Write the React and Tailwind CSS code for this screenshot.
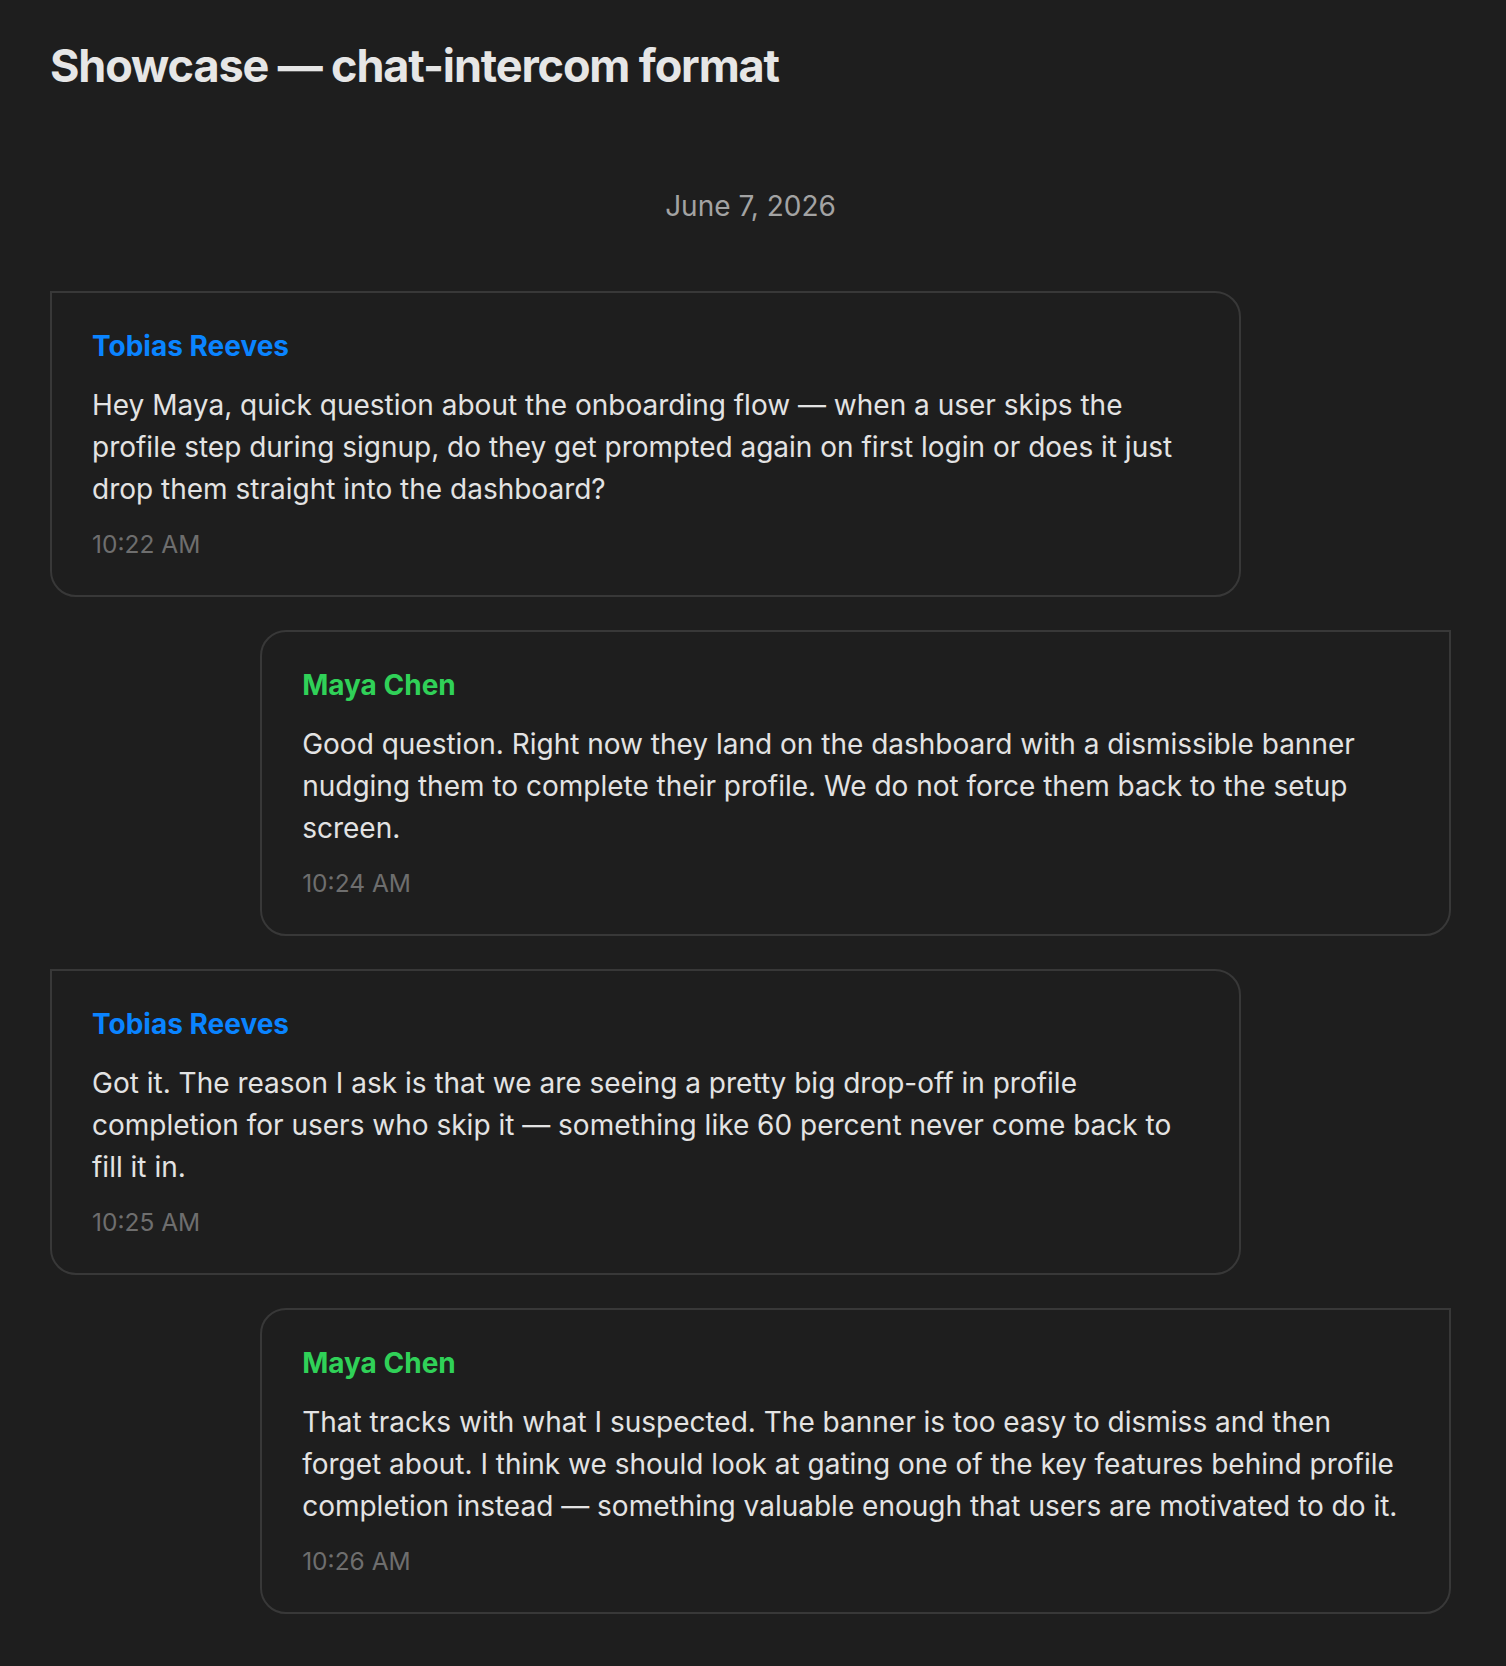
const MESSAGES = [
  {
    who: "Tobias Reeves",
    side: "left",
    text: "Hey Maya, quick question about the onboarding flow — when a user skips the profile step during signup, do they get prompted again on first login or does it just drop them straight into the dashboard?",
    time: "10:22 AM",
  },
  {
    who: "Maya Chen",
    side: "right",
    text: "Good question. Right now they land on the dashboard with a dismissible banner nudging them to complete their profile. We do not force them back to the setup screen.",
    time: "10:24 AM",
  },
  {
    who: "Tobias Reeves",
    side: "left",
    text: "Got it. The reason I ask is that we are seeing a pretty big drop-off in profile completion for users who skip it — something like 60 percent never come back to fill it in.",
    time: "10:25 AM",
  },
  {
    who: "Maya Chen",
    side: "right",
    text: "That tracks with what I suspected. The banner is too easy to dismiss and then forget about. I think we should look at gating one of the key features behind profile completion instead — something valuable enough that users are motivated to do it.",
    time: "10:26 AM",
  },
];

function Bubble({ m }) {
  const left = m.side === "left";
  return (
    <div className={`flex ${left ? "justify-start" : "justify-end"}`}>
      <div
        className={`w-[85%] border-2 border-[#383838] rounded-[26px] px-[40px] pt-[36px] pb-[35px] ${
          left ? "rounded-tl-none" : "rounded-tr-none"
        }`}
      >
        <div
          className={`text-[28px] leading-[34px] font-bold ${
            left ? "text-[#0a84ff]" : "text-[#30d158]"
          }`}
        >
          {m.who}
        </div>
        <p className="mt-[21px] text-[28px] leading-[42px] text-[#e3e3e3]">{m.text}</p>
        <div className="mt-[18px] text-[24.5px] leading-[32px] text-[#6e6e6e]">{m.time}</div>
      </div>
    </div>
  );
}

export default function App() {
  return (
    <div
      className="min-h-screen bg-[#1e1e1e] pt-[40px] pb-[54px]"
      style={{ fontFamily: "Inter, 'Noto Sans', sans-serif" }}
    >
      <div className="ml-[50px] w-[1401px]">
        <h1 className="text-[45px] leading-[52px] font-bold tracking-tight text-[#e6e6e6]">
          Showcase — chat-intercom format
        </h1>
        <div className="mt-[96px] text-center text-[28px] leading-[36px] text-[#a3a3a3]">
          June 7, 2026
        </div>
        <div className="mt-[67px] flex flex-col gap-[33px]">
          {MESSAGES.map((m, i) => (
            <Bubble key={i} m={m} />
          ))}
        </div>
      </div>
    </div>
  );
}
